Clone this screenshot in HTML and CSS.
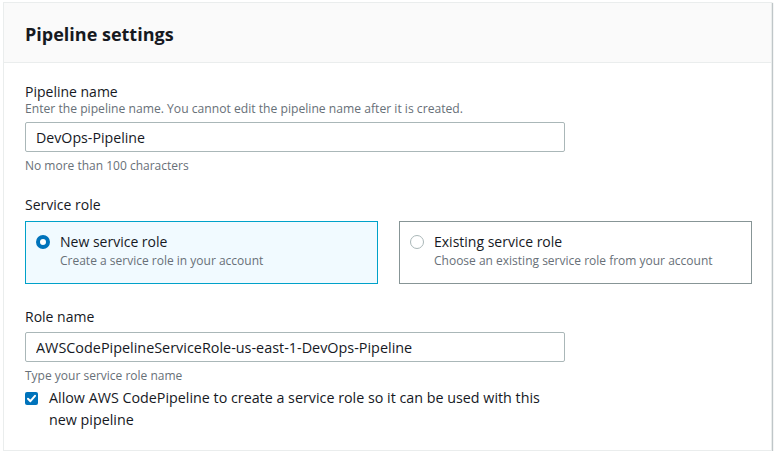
FILE: index.html
```html
<!DOCTYPE html>
<html lang="en">
<head>
<meta charset="utf-8">
<title>Pipeline settings</title>
<link rel="stylesheet" href="styles.css">
</head>
<body>
<section class="card">
  <header class="card-header">
    <h2 class="card-title">Pipeline settings</h2>
  </header>
  <div class="card-body">
    <div class="field">
      <label class="label" for="pname">Pipeline name</label>
      <div class="desc">Enter the pipeline name. You cannot edit the pipeline name after it is created.</div>
      <input class="input" id="pname" type="text" value="DevOps-Pipeline">
      <div class="constraint">No more than 100 characters</div>
    </div>

    <div class="field field-role">
      <div class="label">Service role</div>
      <div class="tiles">
        <label class="tile tile-selected">
          <span class="radio radio-on"></span>
          <span class="tile-text">
            <span class="tile-title">New service role</span>
            <span class="tile-sub">Create a service role in your account</span>
          </span>
        </label>
        <label class="tile">
          <span class="radio"></span>
          <span class="tile-text">
            <span class="tile-title">Existing service role</span>
            <span class="tile-sub">Choose an existing service role from your account</span>
          </span>
        </label>
      </div>
    </div>

    <div class="field field-rolename">
      <label class="label" for="rname">Role name</label>
      <input class="input input-role" id="rname" type="text" value="AWSCodePipelineServiceRole-us-east-1-DevOps-Pipeline">
      <div class="constraint">Type your service role name</div>
      <label class="check">
        <span class="checkbox">
          <svg width="13" height="13" viewBox="0 0 13 13"><path d="M3 6.8 L5.4 9.2 L10 3.8" fill="none" stroke="#fff" stroke-width="2" stroke-linecap="round" stroke-linejoin="round"/></svg>
        </span>
        <span class="check-text">Allow AWS CodePipeline to create a service role so it can be used with this new pipeline</span>
      </label>
    </div>
  </div>
</section>
</body>
</html>
```

FILE: styles.css
```css
* { box-sizing: border-box; }
body {
  margin: 0;
  background: #fff;
  font-family: "Open Sans", "Liberation Sans", sans-serif;
  color: #16191f;
}
.card {
  margin: 2px 0 0 3px;
  width: 769px;
  height: 449px;
  border: 1px solid #eaeded;
  box-shadow: 1px 1px 1px 0 rgba(0, 28, 36, 0.25);
  background: #fff;
}
.card-header {
  height: 60px;
  background: #fafafa;
  border-bottom: 1px solid #eaeded;
  display: flex;
  align-items: center;
  padding: 0 21px;
}
.card-title {
  margin: 0;
  font-size: 18px;
  font-weight: 700;
  line-height: 22px;
  padding-top: 2px;
}
.card-body {
  padding: 20px 20px 0 21px;
}
.field { display: flex; flex-direction: column; }
.label {
  font-size: 14px;
  line-height: 18px;
  color: #16191f;
}
.desc {
  font-size: 12.15px;
  line-height: 16px;
  color: #687078;
}
.input {
  margin-top: 5px;
  width: 540px;
  height: 30px;
  border: 1px solid #aab7b8;
  border-radius: 2px;
  padding: 0 10px;
  font-family: inherit;
  font-size: 14.2px;
  color: #16191f;
  background: #fff;
  outline: none;
}
.constraint {
  margin-top: 6px;
  font-size: 12px;
  line-height: 16px;
  color: #687078;
}
.field-role { margin-top: 22px; }
.tiles {
  margin-top: 7px;
  display: grid;
  grid-template-columns: 353px 353px;
  column-gap: 21px;
}
.tile {
  height: 63px;
  border: 1px solid #879596;
  display: flex;
  align-items: flex-start;
  padding: 10px 10px 0 10px;
  gap: 10px;
}
.tile-selected {
  border-color: #00a1c9;
  background: #f1faff;
}
.radio {
  flex: none;
  width: 14px;
  height: 14px;
  border-radius: 50%;
  border: 1px solid #aab7b8;
  background: #fff;
  margin-top: 3px;
}
.radio-on {
  border: 4px solid #0073bb;
}
.tile-text { display: flex; flex-direction: column; }
.tile-title { font-size: 14px; line-height: 20px; }
.tile-sub { font-size: 12px; line-height: 18px; color: #687078; }
.field-rolename { margin-top: 24px; }
.input-role { margin-top: 6px; font-size: 14.4px; }
.check {
  margin-top: 3px;
  display: flex;
  align-items: flex-start;
  gap: 11px;
  width: 540px;
}
.checkbox {
  flex: none;
  width: 13px;
  height: 13px;
  border-radius: 2px;
  background: #0073bb;
  margin-top: 5px;
  display: flex;
}
.check-text {
  font-size: 14.3px;
  line-height: 22px;
}
```
